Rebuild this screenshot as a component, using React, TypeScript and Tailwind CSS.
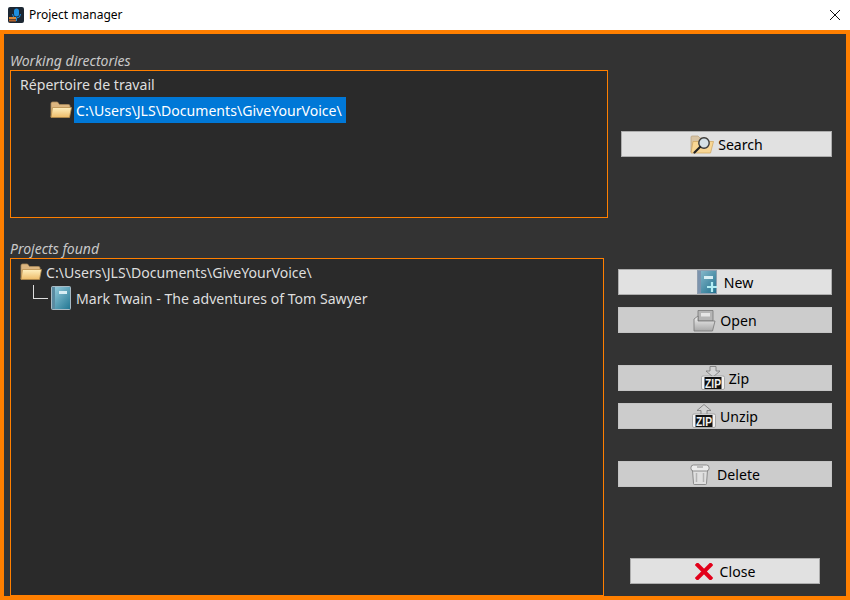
import React from 'react';

const FolderIcon = ({ className }: { className?: string }) => (
  <svg viewBox="0 0 22 18" className={className}>
    <defs>
      <linearGradient id="folderFront" x1="0" y1="0" x2="0" y2="1">
        <stop offset="0" stopColor="#fff0bf" />
        <stop offset="1" stopColor="#edbb68" />
      </linearGradient>
    </defs>
    <path d="M1 16V2.500A1.500 1.500 0 0 1 2.500 1h5l2 2.500h9A1.500 1.500 0 0 1 20 5v3H5z" fill="#dcb680" stroke="#a98a5c" strokeWidth="0.8" />
    <path d="M1 16.500 2.500 6.500h19l-2 10z" fill="url(#folderFront)" stroke="#b58c4a" strokeWidth="0.8" />
  </svg>
);

const BookIcon = ({ className }: { className?: string }) => (
  <svg viewBox="0 0 20 24" className={className}>
    <defs>
      <linearGradient id="bookCover" x1="0" y1="0" x2="1" y2="1">
        <stop offset="0" stopColor="#9fd2e2" />
        <stop offset="1" stopColor="#1f7591" />
      </linearGradient>
    </defs>
    <rect x="0.500" y="0.500" width="19" height="23" rx="1" fill="url(#bookCover)" stroke="#a8bac4" />
    <rect x="1" y="1" width="3" height="22" fill="#5b8ba1" />
    <rect x="8" y="5" width="8" height="3" fill="#d8eef4" />
  </svg>
);

const SearchIcon = () => (
  <svg viewBox="0 0 24 19" className="w-6 h-[19px] shrink-0">
    <path d="M1 17V2A1 1 0 0 1 2 1h6l2 2h7v5H5z" fill="#d8c4a4" stroke="#b8a27e" strokeWidth="0.7" />
    <path d="M1 18 3 6.500h20.500l-3 11.500z" fill="#f8d694" stroke="#cfa35a" strokeWidth="0.7" />
    <circle cx="14" cy="8" r="5.200" fill="#d5e0e6" stroke="#3b3b3b" strokeWidth="1.400" />
    <path d="M10 12 4.500 17.500" stroke="#222" strokeWidth="2.200" strokeLinecap="round" />
  </svg>
);

const NewIcon = () => (
  <svg viewBox="0 0 21 24" className="w-[21px] h-6 shrink-0 mr-[2px]">
    <defs>
      <linearGradient id="newCover" x1="0" y1="0" x2="1" y2="1">
        <stop offset="0" stopColor="#8fbed0" />
        <stop offset="1" stopColor="#1f6f8c" />
      </linearGradient>
    </defs>
    <rect x="0.500" y="0.500" width="19" height="23" fill="url(#newCover)" stroke="#8f9fb0" />
    <rect x="1" y="1" width="3" height="22" fill="#7c93ad" />
    <rect x="7" y="6" width="9" height="3" fill="#d8eef4" />
    <path d="M15 12v10M10 17h10" stroke="#b4eef4" strokeWidth="2.200" />
  </svg>
);

const OpenIcon = () => (
  <svg viewBox="0 0 23 23" className="w-[23px] h-[23px] shrink-0">
    <defs>
      <linearGradient id="openFront" x1="0" y1="0" x2="0" y2="1">
        <stop offset="0" stopColor="#f2f2f2" />
        <stop offset="1" stopColor="#a8a8a8" />
      </linearGradient>
    </defs>
    <path d="M5 12V1.500h15V12z" fill="#b5b5b5" stroke="#777" strokeWidth="0.8" />
    <rect x="8" y="4" width="9" height="3.500" fill="#e6e6e6" />
    <path d="M1 22V10l4-3v5h17l-2.500 10z" fill="url(#openFront)" stroke="#777" strokeWidth="0.8" />
  </svg>
);

const ZipIcon = ({ up }: { up?: boolean }) => (
  <svg viewBox="0 0 24 24" className="w-6 h-6 shrink-0">
    {up ? (
      <path d="M12 0.500 19 6.500h-4V11H9V6.500H5z" fill="#d4d4d4" stroke="#777" strokeWidth="0.8" />
    ) : (
      <path d="M9 0.500h6V5h4l-7 6-7-6h4z" fill="#d4d4d4" stroke="#777" strokeWidth="0.8" />
    )}
    <rect x="0.500" y="10" width="23" height="13.500" rx="1.500" fill="#f3f3f3" stroke="#999" strokeWidth="0.8" />
    <rect x="3.500" y="11" width="17" height="12" fill="#111" />
    <text x="12" y="21.800" textAnchor="middle" fontFamily="'Liberation Sans', sans-serif" fontWeight="700" fontSize="12" textLength="16" lengthAdjust="spacingAndGlyphs" fill="#f2f2f2">ZIP</text>
  </svg>
);

const DeleteIcon = () => (
  <svg viewBox="0 0 20 22" className="w-5 h-[22px] shrink-0 mr-[3px]">
    <path d="M2.500 7h15l-1 13.500a1 1 0 0 1-1 1h-11a1 1 0 0 1-1-1z" fill="#e0e0e0" stroke="#777" strokeWidth="0.8" />
    <path d="M6.500 10v9M13.500 10v9" stroke="#b4b4b4" strokeWidth="1.500" />
    <rect x="1" y="2" width="18" height="6" rx="2.500" fill="#ececec" stroke="#777" strokeWidth="0.8" />
    <path d="M7 4h6" fill="none" stroke="#777" strokeWidth="0.8" />
  </svg>
);

const CloseIcon = () => (
  <svg viewBox="0 0 18 17" className="w-[18px] h-[17px] shrink-0 mr-[3px]">
    <path d="M2.500 2 15.500 15M15.500 2 2.500 15" stroke="#e2001a" strokeWidth="4" strokeLinecap="square" />
  </svg>
);

const ActionButton = ({
  icon,
  label,
  className,
}: {
  icon: React.ReactNode;
  label: string;
  className: string;
}) => (
  <button className={`h-[26px] flex items-center justify-center gap-1 text-[14.1px] text-black ${className}`}>
    {icon}
    <span className="pt-px">{label}</span>
  </button>
);

const activeBtn = 'bg-[#e1e1e1] border border-[#adadad]';
const dimBtn = 'bg-[#cccccc] border border-[#c4c4c4]';

export default function App() {
  return (
    <div className="w-[850px] h-[600px] flex flex-col font-['Noto_Sans','Open_Sans',sans-serif] overflow-hidden">
      {/* Title bar */}
      <div className="h-[30px] shrink-0 bg-white flex items-center pl-2 pr-[10px]">
        <svg viewBox="0 0 16 16" className="w-4 h-4 shrink-0">
          <rect width="16" height="16" rx="2" fill="#1c2733" />
          <rect x="6" y="1.500" width="5" height="8" rx="2.500" fill="#1d8fe0" />
          <path d="M4.500 7a4 4 0 0 0 8 0M8.500 11v3" stroke="#1d8fe0" fill="none" />
          <rect x="1" y="10" width="7" height="2" fill="#d98a3a" />
          <rect x="1" y="12.500" width="7" height="2" fill="#b4622a" />
        </svg>
        <span className="ml-[5px] text-xs text-black">Project manager</span>
        <svg viewBox="0 0 10 10" className="ml-auto w-[10px] h-[10px]">
          <path d="M0 0 10 10M10 0 0 10" stroke="#111" strokeWidth="1" />
        </svg>
      </div>

      {/* Window body */}
      <div className="flex-1 min-h-0 border-4 border-[#ff7f00] bg-[#333333] flex pl-[6px] pr-[14px] text-[#dedede]">
        <div className="w-[598px] flex flex-col">
          <div className="h-[18px] mt-[18px] leading-[18px] text-[14px] italic text-[#c8c8c8]">Working directories</div>
          <div className="h-[148px] border border-[#ff7f00] bg-[#2a2a2a] text-[14.1px]">
            <div className="h-[26px] pl-[9px] pt-px flex items-center">Répertoire de travail</div>
            <div className="h-[26px] pl-[39px] flex items-center">
              <FolderIcon className="w-[22px] h-[18px] shrink-0" />
              <span className="ml-[2px] h-[26px] w-[272px] pl-[2px] pt-px flex items-center bg-[#0078d7] text-white whitespace-nowrap">
                C:\Users\JLS\Documents\GiveYourVoice\
              </span>
            </div>
          </div>

          <div className="h-[18px] mt-[22px] leading-[18px] text-[14px] italic text-[#c8c8c8]">Projects found</div>
          <div className="flex-1 w-[594px] border border-[#ff7f00] bg-[#2a2a2a] text-[14.1px]">
            <div className="h-[26px] pl-[9px] flex items-center">
              <FolderIcon className="w-[22px] h-[18px] shrink-0" />
              <span className="ml-[4px] pt-px whitespace-nowrap">C:\Users\JLS\Documents\GiveYourVoice\</span>
            </div>
            <div className="h-[26px] pl-[22px] flex items-center">
              <div className="w-[15px] h-[14px] self-start border-l border-b border-[#dedede] shrink-0" />
              <BookIcon className="ml-[3px] w-5 h-6 shrink-0" />
              <span className="ml-[5px] pt-px whitespace-nowrap">Mark Twain - The adventures of Tom Sawyer</span>
            </div>
          </div>
        </div>

        <div className="ml-[10px] w-[214px] flex flex-col">
          <ActionButton icon={<SearchIcon />} label="Search" className={`mt-[97px] w-[211px] self-end ${activeBtn}`} />
          <ActionButton icon={<NewIcon />} label="New" className={`mt-[112px] ${activeBtn}`} />
          <ActionButton icon={<OpenIcon />} label="Open" className={`mt-3 ${dimBtn}`} />
          <ActionButton icon={<ZipIcon />} label="Zip" className={`mt-8 ${dimBtn}`} />
          <ActionButton icon={<ZipIcon up />} label="Unzip" className={`mt-3 ${dimBtn}`} />
          <ActionButton icon={<DeleteIcon />} label="Delete" className={`mt-8 ${dimBtn}`} />
          <ActionButton icon={<CloseIcon />} label="Close" className={`mt-auto mb-3 w-[190px] self-center ${activeBtn}`} />
        </div>
      </div>
    </div>
  );
}
